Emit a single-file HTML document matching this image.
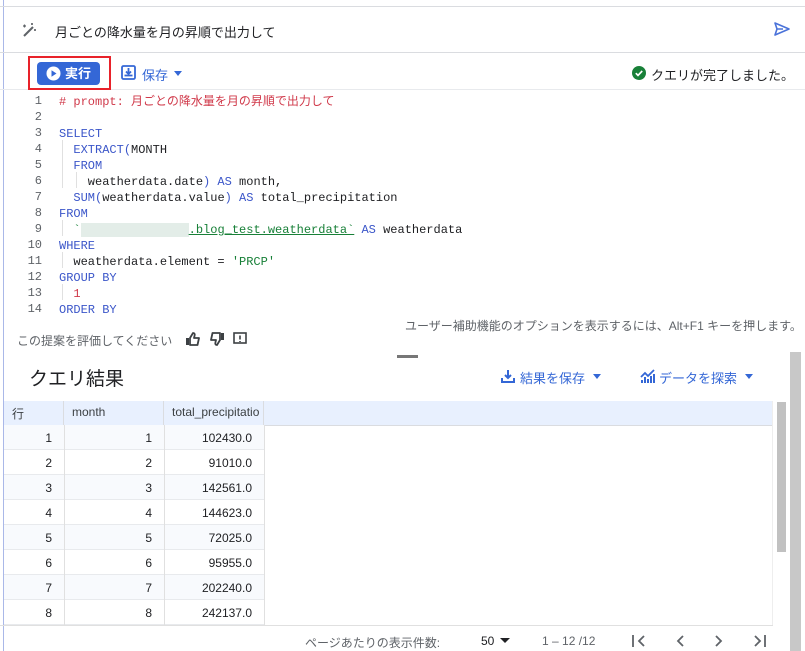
<!DOCTYPE html>
<html><head><meta charset="utf-8"><style>
*{box-sizing:border-box;margin:0;padding:0}
body{width:805px;height:651px;overflow:hidden;background:#fff;font-family:"Liberation Sans","Noto Sans CJK JP",sans-serif;color:#202124;position:relative}
.a{position:absolute}
.code{font-family:"Liberation Mono","Noto Sans CJK JP",monospace;font-size:12px;white-space:pre}
.ln{position:absolute;width:42px;text-align:right;color:#5f6368;font-family:"Liberation Mono",monospace;font-size:12px}
.k{color:#3b56c9}.r{color:#d0394a}.s{color:#188038}
.th{position:absolute;top:401px;height:24px;font-size:12px;color:#3c4043;padding:4px 8px;border-right:1px solid #dadce0}
.row{position:absolute;left:4px;width:260px;height:25px;border-bottom:1px solid #e8eaed;font-size:12px}
.row span{position:absolute;top:6px;text-align:right}
</style></head><body>
<div class="a" style="left:3px;top:0;width:1px;height:651px;background:#aab8e8"></div>
<div class="a" style="left:0;top:6px;width:805px;height:1px;background:#dadce0"></div>
<div class="a" style="left:0;top:52px;width:805px;height:1px;background:#dadce0"></div>
<div class="a" style="left:0;top:89px;width:805px;height:1px;background:#e8eaed"></div>
<svg class="a" style="left:20px;top:21px" width="18" height="18" viewBox="0 0 18 18"><path d="M4 15 L13 6" stroke="#5f6368" stroke-width="2"/><path d="M3 5h3M4.5 3.5v3M12 2v2M11 3h2M14 9h2M15 8v2" stroke="#5f6368" stroke-width="1.2"/></svg>
<div class="a" style="left:55px;top:22px;font-size:13px">月ごとの降水量を月の昇順で出力して</div>
<svg class="a" style="left:773px;top:21px" width="18" height="16" viewBox="0 0 18 16"><path d="M2 2 L16 8 L2 14 L4 8 Z M4 8 H10" fill="none" stroke="#4a72d9" stroke-width="1.6" stroke-linejoin="round"/></svg>
<div class="a" style="left:28px;top:56px;width:83px;height:34px;border:2px solid #e8222a"></div>
<div class="a" style="left:37px;top:62px;width:63px;height:23px;background:#3467d6;border-radius:4px;color:#fff;font-size:13px;font-weight:bold;line-height:23px;padding-left:28px">実行</div>
<svg class="a" style="left:46px;top:66px" width="15" height="15" viewBox="0 0 15 15"><circle cx="7.5" cy="7.5" r="7" fill="#fff"/><path d="M5.5 4.3 L10.5 7.5 L5.5 10.7Z" fill="#3467d6"/></svg>
<svg class="a" style="left:121px;top:65px" width="15" height="15" viewBox="0 0 15 15"><rect x="1" y="1" width="13" height="13" rx="1.5" fill="none" stroke="#3467d6" stroke-width="1.8"/><path d="M7.5 3v6M5 6.5l2.5 2.5 2.5-2.5" fill="none" stroke="#3467d6" stroke-width="1.8"/><path d="M3.5 10.5h8" stroke="#3467d6" stroke-width="1.8"/></svg>
<div class="a" style="left:142px;top:65px;font-size:13px;color:#3467d6">保存</div>
<div class="a" style="left:174px;top:71px;border:4px solid transparent;border-top:5px solid #3467d6"></div>
<svg class="a" style="left:632px;top:66px" width="14" height="14" viewBox="0 0 14 14"><circle cx="7" cy="7" r="7" fill="#188038"/><path d="M3.8 7.2l2.2 2.2 4.2-4.4" fill="none" stroke="#fff" stroke-width="1.7"/></svg>
<div class="a" style="left:651px;top:65px;font-size:13px">クエリが完了しました。</div>
<div class="a" style="left:0;top:94px">
<div class="ln" style="top:0">1</div><div class="ln" style="top:16px">2</div><div class="ln" style="top:32px">3</div><div class="ln" style="top:48px">4</div><div class="ln" style="top:64px">5</div><div class="ln" style="top:80px">6</div><div class="ln" style="top:96px">7</div><div class="ln" style="top:112px">8</div><div class="ln" style="top:128px">9</div><div class="ln" style="top:144px">10</div><div class="ln" style="top:160px">11</div><div class="ln" style="top:176px">12</div><div class="ln" style="top:192px">13</div><div class="ln" style="top:208px">14</div>
</div>
<div class="a" style="left:62px;top:140px;width:1px;height:48px;background:#e0e0e0"></div>
<div class="a" style="left:76px;top:172px;width:1px;height:16px;background:#e0e0e0"></div>
<div class="a" style="left:62px;top:220px;width:1px;height:16px;background:#e0e0e0"></div>
<div class="a" style="left:62px;top:252px;width:1px;height:16px;background:#e0e0e0"></div>
<div class="a" style="left:62px;top:284px;width:1px;height:16px;background:#e0e0e0"></div>
<div class="a code" style="left:59px;top:94px;line-height:16px"><span class="r"># prompt: 月ごとの降水量を月の昇順で出力して</span>

<span class="k">SELECT</span>
  <span class="k">EXTRACT(</span>MONTH
  <span class="k">FROM</span>
    weatherdata.date<span class="k">) AS</span> month,
  <span class="k">SUM(</span>weatherdata.value<span class="k">) AS</span> total_precipitation
<span class="k">FROM</span>
  <span class="s">`<span style="background:#e3ede8;color:transparent">xxxxxxxxxxxxxxx</span><span style="text-decoration:underline">.blog_test.weatherdata`</span></span> <span class="k">AS</span> weatherdata
<span class="k">WHERE</span>
  weatherdata.element = <span class="s">'PRCP'</span>
<span class="k">GROUP BY</span>
  <span class="r">1</span>
<span class="k">ORDER BY</span></div>
<div class="a" style="left:405px;top:317px;font-size:12px;color:#5f6368">ユーザー補助機能のオプションを表示するには、Alt+F1 キーを押します。</div>
<div class="a" style="left:17px;top:332px;font-size:12px;color:#5f6368">この提案を評価してください</div>
<svg class="a" style="left:185px;top:332px" width="16" height="14" viewBox="0 0 16 14"><path d="M1 6h3v7H1z" fill="#3c4043"/><path d="M5 6l3-5c1.5 0 2 1 1.6 2.5L9 6h5l-1.5 7H5z" fill="none" stroke="#3c4043" stroke-width="1.8" stroke-linejoin="round"/></svg>
<svg class="a" style="left:209px;top:332px" width="16" height="14" viewBox="0 0 16 14"><path d="M12 1h3v7h-3z" fill="#3c4043"/><path d="M11 8l-3 5c-1.5 0-2-1-1.6-2.5L7 8H2l1.5-7H11z" fill="none" stroke="#3c4043" stroke-width="1.8" stroke-linejoin="round"/></svg>
<svg class="a" style="left:233px;top:332px" width="14" height="14" viewBox="0 0 14 14"><rect x="1" y="1" width="12" height="10" fill="none" stroke="#3c4043" stroke-width="1.6"/><path d="M7 3.5v4M7 9v1" stroke="#3c4043" stroke-width="1.6"/></svg>
<div class="a" style="left:397px;top:355px;width:21px;height:3px;background:#777"></div>
<div class="a" style="left:29px;top:364px;font-size:19px">クエリ結果</div>
<svg class="a" style="left:501px;top:369px" width="14" height="14" viewBox="0 0 14 14"><path d="M7 1v8M4 6l3 3 3-3" fill="none" stroke="#3467d6" stroke-width="2"/><path d="M1 9v4h12V9" fill="none" stroke="#3467d6" stroke-width="2"/></svg>
<div class="a" style="left:520px;top:368px;font-size:13px;color:#3467d6">結果を保存</div>
<div class="a" style="left:593px;top:374px;border:4px solid transparent;border-top:5px solid #3467d6"></div>
<svg class="a" style="left:640px;top:368px" width="16" height="16" viewBox="0 0 16 16"><path d="M1 9l4-4 3 3 6-6" fill="none" stroke="#3467d6" stroke-width="1.8"/><path d="M2 12v3M5 9v6M8 11v4M11 8v7M14 6v9" stroke="#3467d6" stroke-width="2"/></svg>
<div class="a" style="left:659px;top:368px;font-size:13px;color:#3467d6">データを探索</div>
<div class="a" style="left:745px;top:374px;border:4px solid transparent;border-top:5px solid #3467d6"></div>
<div class="a" style="left:4px;top:401px;width:769px;height:25px;background:#e8f0fe;border-bottom:1px solid #dadce0"></div>
<div class="th" style="left:4px;width:60px">行</div>
<div class="th" style="left:64px;width:100px">month</div>
<div class="th" style="left:164px;width:100px;overflow:hidden;white-space:nowrap">total_precipitatio</div>
<div class="a" style="left:0;top:425px">
<div class="row" style="top:0;background:#f8fafd"><span style="left:0;width:48px">1</span><span style="left:60px;width:88px">1</span><span style="left:160px;width:88px">102430.0</span></div>
<div class="row" style="top:25px"><span style="left:0;width:48px">2</span><span style="left:60px;width:88px">2</span><span style="left:160px;width:88px">91010.0</span></div>
<div class="row" style="top:50px;background:#f8fafd"><span style="left:0;width:48px">3</span><span style="left:60px;width:88px">3</span><span style="left:160px;width:88px">142561.0</span></div>
<div class="row" style="top:75px"><span style="left:0;width:48px">4</span><span style="left:60px;width:88px">4</span><span style="left:160px;width:88px">144623.0</span></div>
<div class="row" style="top:100px;background:#f8fafd"><span style="left:0;width:48px">5</span><span style="left:60px;width:88px">5</span><span style="left:160px;width:88px">72025.0</span></div>
<div class="row" style="top:125px"><span style="left:0;width:48px">6</span><span style="left:60px;width:88px">6</span><span style="left:160px;width:88px">95955.0</span></div>
<div class="row" style="top:150px;background:#f8fafd"><span style="left:0;width:48px">7</span><span style="left:60px;width:88px">7</span><span style="left:160px;width:88px">202240.0</span></div>
<div class="row" style="top:175px"><span style="left:0;width:48px">8</span><span style="left:60px;width:88px">8</span><span style="left:160px;width:88px">242137.0</span></div>
</div>
<div class="a" style="left:64px;top:425px;width:1px;height:200px;background:#e0e0e0"></div>
<div class="a" style="left:164px;top:425px;width:1px;height:200px;background:#e0e0e0"></div>
<div class="a" style="left:264px;top:425px;width:1px;height:200px;background:#e0e0e0"></div>
<div class="a" style="left:772px;top:401px;width:1px;height:225px;background:#eee"></div>
<div class="a" style="left:777px;top:402px;width:9px;height:150px;background:#c1c1c1"></div>
<div class="a" style="left:790px;top:352px;width:11px;height:299px;background:#c8c8c8"></div>
<div class="a" style="left:0;top:625px;width:773px;height:1px;background:#e0e0e0"></div>
<div class="a" style="left:305px;top:634px;font-size:12px;color:#5f6368">ページあたりの表示件数:</div>
<div class="a" style="left:481px;top:634px;font-size:12px">50</div>
<div class="a" style="left:500px;top:638px;border:5px solid transparent;border-top:5px solid #202124"></div>
<div class="a" style="left:542px;top:634px;font-size:12px;color:#5f6368">1 – 12 /12</div>
<svg class="a" style="left:630px;top:633px" width="140" height="16" viewBox="0 0 140 16"><g fill="none" stroke="#5f6368" stroke-width="1.8"><path d="M3 2v12M14 3l-5 5 5 5M53 3l-5 5 5 5M86 3l5 5-5 5M125 3l5 5-5 5M135 2v12"/></g></svg>
</body></html>
